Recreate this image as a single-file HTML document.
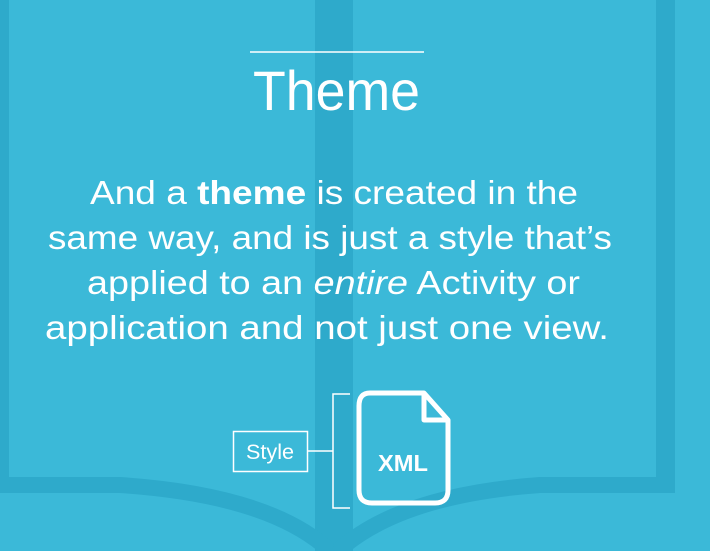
<!DOCTYPE html>
<html><head><meta charset="utf-8"><style>html,body{margin:0;padding:0;background:#3bb9d8}svg{display:block}</style></head>
<body>
<svg width="710" height="551" viewBox="0 0 710 551" xmlns="http://www.w3.org/2000/svg" font-family="Liberation Sans, sans-serif">
<rect width="710" height="551" fill="#3bb9d8"/>
<g fill="#2eaacb">
<rect x="0" y="0" width="9" height="485"/>
<rect x="656" y="0" width="19" height="485"/>
<rect x="315" y="0" width="38" height="551"/>
</g>
<g fill="none" stroke="#2eaacb" stroke-width="16">
<path d="M0 485 H120 Q270 495 330 551"/>
<path d="M675 485 H540 Q400 495 338 551"/>
</g>
<line x1="250" y1="52" x2="424" y2="52" stroke="#fff" stroke-width="1.5"/>
<text x="253" y="110" font-size="56" fill="#fff" textLength="167" lengthAdjust="spacingAndGlyphs">Theme</text>
<g fill="#fff" font-size="33">
<text x="90" y="204" textLength="488" lengthAdjust="spacingAndGlyphs">And a <tspan font-weight="bold">theme</tspan> is created in the</text>
<text x="48" y="249" textLength="564" lengthAdjust="spacingAndGlyphs">same way, and is just a style that’s</text>
<text x="87" y="294" textLength="493" lengthAdjust="spacingAndGlyphs">applied to an <tspan font-style="italic">entire</tspan> Activity or</text>
<text x="45" y="339" textLength="564" lengthAdjust="spacingAndGlyphs">application and not just one view.</text>
</g>
<rect x="233.5" y="431.5" width="74" height="40" fill="none" stroke="#fff" stroke-width="1.5"/>
<text x="270" y="459" font-size="21" fill="#fff" text-anchor="middle" textLength="48" lengthAdjust="spacingAndGlyphs">Style</text>
<path d="M308 451 H333 M350 394 H333 V508 H350" fill="none" stroke="#fff" stroke-width="1.5"/>
<path d="M370 393 H424 L448 420 V490 Q448 503 435 503 H372 Q359 503 359 490 V406 Q359 393 370 393 Z" fill="none" stroke="#fff" stroke-width="5" stroke-linejoin="round"/>
<path d="M424 393 V420 H448" fill="none" stroke="#fff" stroke-width="5" stroke-linejoin="round"/>
<text x="403" y="471" font-size="23" font-weight="bold" fill="#fff" text-anchor="middle" textLength="50" lengthAdjust="spacingAndGlyphs">XML</text>
</svg>
</body></html>
